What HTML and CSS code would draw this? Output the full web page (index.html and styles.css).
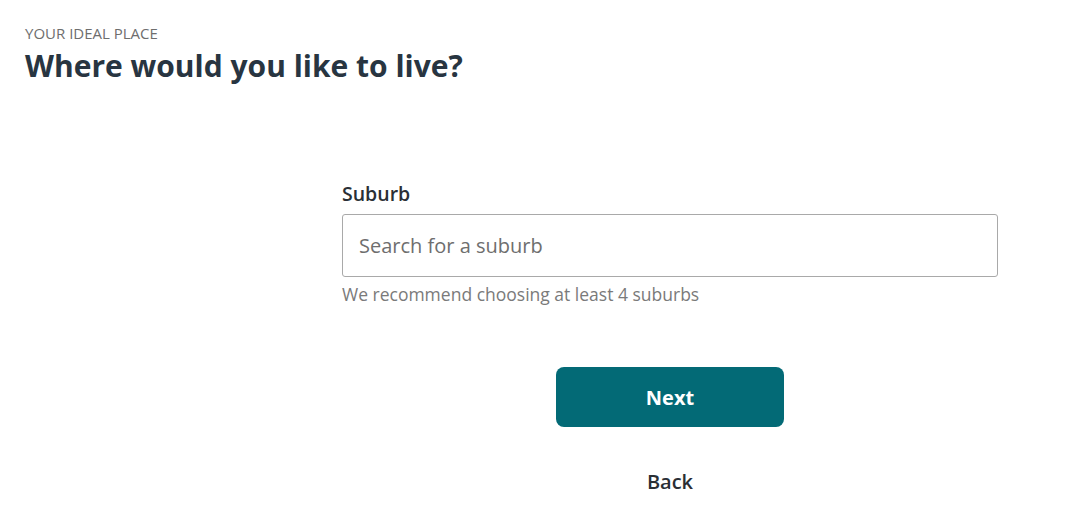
FILE: index.html
```html
<!DOCTYPE html>
<html lang="en">
<head>
<meta charset="utf-8">
<link rel="stylesheet" href="styles.css">
</head>
<body>
<header class="intro">
  <div class="eyebrow">YOUR IDEAL PLACE</div>
  <h1 class="title">Where would you like to live?</h1>
</header>
<main class="form">
  <label class="label" for="suburb">Suburb</label>
  <input id="suburb" class="input" type="text" placeholder="Search for a suburb">
  <div class="hint">We recommend choosing at least 4 suburbs</div>
  <div class="actions">
    <button class="next">Next</button>
    <button class="back">Back</button>
  </div>
</main>
</body>
</html>
```
FILE: styles.css
```css
html, body { margin: 0; padding: 0; background: #fff; }
body { font-family: "Open Sans", sans-serif; color: #2a3540; }
.intro { padding: 23px 0 0 25px; }
.eyebrow { font-size: 15px; line-height: 20px; color: #6e6e6e; }
.title { margin: 5px 0 0; font-size: 30px; line-height: 36px; font-weight: 700; color: #283541; }
.form { width: 656px; margin: 97px 0 0 342px; display: flex; flex-direction: column; }
.label { font-size: 19.5px; font-weight: 600; line-height: 26px; color: #2a2f35; }
.input { margin-top: 7px; height: 63px; box-sizing: border-box; border: 1px solid #a9a9a9; border-radius: 3px; padding: 0 16px; font-family: inherit; font-size: 20px; color: #333; outline: none; }
.input::placeholder { color: #6e6e6e; }
.hint { margin-top: 5px; font-size: 17.5px; line-height: 24px; color: #7a7a7a; }
.actions { display: flex; flex-direction: column; align-items: center; margin-top: 61px; }
.next { width: 228px; height: 60px; border: none; border-radius: 8px; background: #036a76; color: #fff; font-family: inherit; font-size: 20px; font-weight: 700; }
.back { margin-top: 41px; border: none; background: none; font-family: inherit; font-size: 20px; font-weight: 600; color: #2a2f35; padding: 0; }
```
